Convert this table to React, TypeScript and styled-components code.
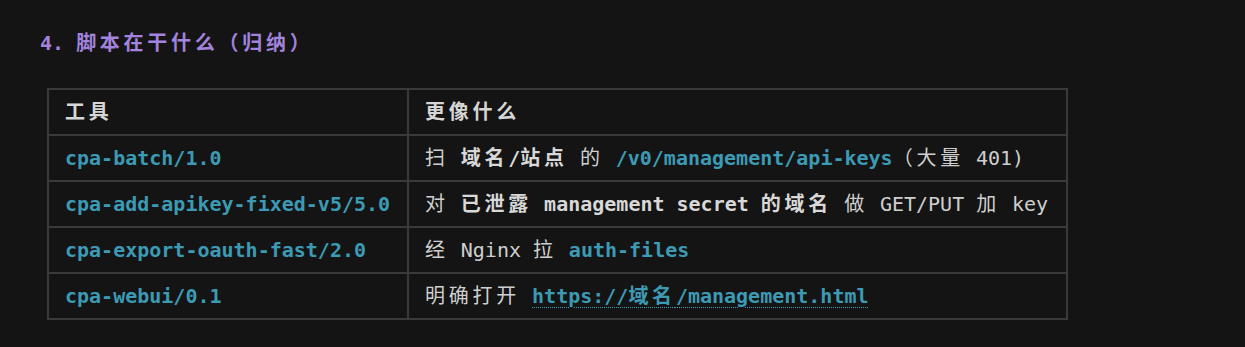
import React from "react";
import styled, { createGlobalStyle } from "styled-components";

const Global = createGlobalStyle`
  html, body {
    margin: 0;
    padding: 0;
    background: #141414;
  }
  body {
    font-family: "DejaVu Sans Mono", "Noto Sans CJK SC", monospace;
    color: #cfcfcf;
  }
`;

const Page = styled.div`
  padding: 28px 40px 20px 40px;
  font-size: 20px;
`;

const Title = styled.h4`
  margin: 0;
  font-size: 20px;
  line-height: 30px;
  font-weight: 700;
  color: #a283de;
`;

const Table = styled.table`
  margin: 30px 0 0 7px;
  width: 1021px;
  table-layout: fixed;
  border-collapse: collapse;
  border: 2px solid #3a3a3a;
`;

const Th = styled.th<{ $w?: number }>`
  width: ${(p) => (p.$w ? `${p.$w}px` : "auto")};
  text-align: left;
  font-weight: 700;
  color: #d6d6d6;
  border: 2px solid #3a3a3a;
  padding: 9px 16px;
  line-height: 26px;
  white-space: nowrap;
`;

const Td = styled.td`
  border: 2px solid #3a3a3a;
  padding: 9px 16px;
  line-height: 26px;
  white-space: nowrap;
  color: #cfcfcf;
`;

const Han = styled.span`
  letter-spacing: 3.75px;
`;

const Code = styled.code`
  font-family: inherit;
  font-weight: 700;
  color: #3c9ab4;
`;

const Strong = styled.strong`
  font-weight: 700;
  color: #d8d8d8;
`;

const Link = styled.a`
  font-weight: 700;
  color: #3c9ab4;
  text-decoration: underline dotted;
  text-decoration-thickness: 1px;
  text-underline-offset: 4px;
`;

const CJK = /([\u3000-\u303f\u3400-\u9fff\uff00-\uffef]+)/;

function T({ children }: { children: string }) {
  const parts = children.split(CJK).filter((s) => s.length > 0);
  return (
    <>
      {parts.map((p, i) => (CJK.test(p) ? <Han key={i}>{p}</Han> : <React.Fragment key={i}>{p}</React.Fragment>))}
    </>
  );
}

export default function App() {
  return (
    <>
      <Global />
      <Page>
        <Title>
          <T>4. 脚本在干什么（归纳）</T>
        </Title>
        <Table>
          <thead>
            <tr>
              <Th $w={326}>
                <T>工具</T>
              </Th>
              <Th>
                <T>更像什么</T>
              </Th>
            </tr>
          </thead>
          <tbody>
            <tr>
              <Td>
                <Code>cpa-batch/1.0</Code>
              </Td>
              <Td>
                <T>扫 </T>
                <Strong>
                  <T>域名/站点</T>
                </Strong>
                <T> 的 </T>
                <Code>/v0/management/api-keys</Code>
                <T>（大量 401)</T>
              </Td>
            </tr>
            <tr>
              <Td>
                <Code>cpa-add-apikey-fixed-v5/5.0</Code>
              </Td>
              <Td>
                <T>对 </T>
                <Strong>
                  <T>已泄露 management secret 的域名</T>
                </Strong>
                <T> 做 GET/PUT 加 key</T>
              </Td>
            </tr>
            <tr>
              <Td>
                <Code>cpa-export-oauth-fast/2.0</Code>
              </Td>
              <Td>
                <T>经 Nginx 拉 </T>
                <Code>auth-files</Code>
              </Td>
            </tr>
            <tr>
              <Td>
                <Code>cpa-webui/0.1</Code>
              </Td>
              <Td>
                <T>明确打开 </T>
                <Link href="#">
                  <T>https://域名/management.html</T>
                </Link>
              </Td>
            </tr>
          </tbody>
        </Table>
      </Page>
    </>
  );
}
